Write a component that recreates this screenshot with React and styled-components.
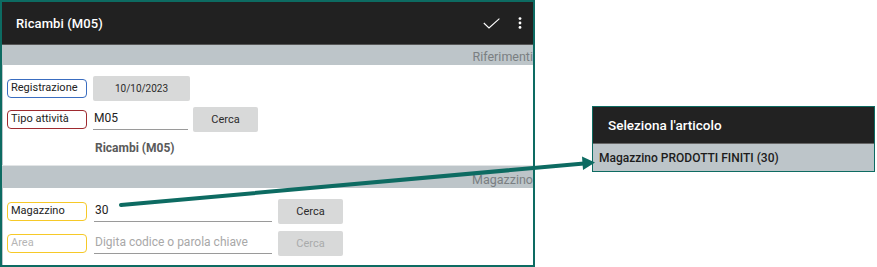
import React from 'react';
import styled, { createGlobalStyle } from 'styled-components';

const TEAL = '#0d6b62';

const GlobalStyle = createGlobalStyle`
  html, body { margin: 0; padding: 0; background: #fff; }
  body { font-family: Roboto, "Noto Sans", sans-serif; }
`;

const Stage = styled.div`
  position: relative;
  width: 877px;
  height: 267px;
  display: flex;
  align-items: flex-start;
  overflow: hidden;
`;

const Panel = styled.div`
  width: 531px;
  height: 263px;
  border: 2px solid ${TEAL};
  background: #bdc5c9;
  display: flex;
  flex-direction: column;
  overflow: hidden;
`;

const Toolbar = styled.div`
  height: 43px;
  flex-shrink: 0;
  background: #212121;
  color: #fff;
  display: flex;
  align-items: center;
  padding-left: 14px;
  padding-right: 11px;
  border-bottom: 1px solid #555;
  box-sizing: border-box;
`;

const Title = styled.div`
  flex: 1;
  font-size: 13px;
  font-weight: 500;
  letter-spacing: 0.1px;
`;

const ToolIcons = styled.div`
  display: flex;
  align-items: center;
  gap: 18px;
`;

const Band = styled.div`
  height: ${(p) => p.$h}px;
  flex-shrink: 0;
  display: flex;
  align-items: flex-end;
  justify-content: flex-end;
  color: #7a7f82;
  font-size: 12.5px;
  line-height: 17px;
  margin-right: 0;
  border-top: ${(p) => (p.$line ? '1px solid #e2e5e6' : 'none')};
  box-sizing: border-box;
`;

const Card = styled.div`
  background: #fff;
  margin-left: 1px;
  height: ${(p) => p.$h}px;
  flex-shrink: 0;
  box-sizing: border-box;
  padding: ${(p) => p.$pad};
  display: flex;
  flex-direction: column;
  gap: ${(p) => p.$gap}px;
`;

const Row = styled.div`
  display: flex;
  align-items: center;
  height: 25px;
`;

const Label = styled.div`
  width: 80px;
  height: 19px;
  box-sizing: border-box;
  margin-left: 4px;
  border: 1.5px solid ${(p) => p.$color};
  border-radius: 4px;
  font-size: 11px;
  line-height: 16px;
  padding-left: 3px;
  color: ${(p) => (p.$faint ? '#b5b5b5' : '#222')};
`;

const GrayButton = styled.div`
  width: ${(p) => p.$w}px;
  height: 25px;
  margin-left: ${(p) => p.$ml}px;
  background: #d8d9d9;
  border-radius: 2px;
  display: flex;
  align-items: center;
  justify-content: center;
  font-size: ${(p) => p.$fs || 11}px;
  color: ${(p) => (p.$disabled ? '#a9abab' : '#2b2b2b')};
`;

const Field = styled.div`
  width: ${(p) => p.$w}px;
  margin-left: ${(p) => p.$ml}px;
  height: 22px;
  border-bottom: 1px solid #9a9a9a;
  box-sizing: border-box;
  font-size: 12px;
  line-height: 20px;
  padding-left: 1px;
  color: ${(p) => (p.$placeholder ? '#a8a8a8' : '#222')};
  white-space: nowrap;
  align-self: center;
  margin-top: -2px;
`;

const Caption = styled.div`
  margin-left: 92px;
  font-size: 12px;
  font-weight: 700;
  color: #5a5a5a;
  margin-top: 3px;
`;

const Dialog = styled.div`
  margin-left: 57px;
  margin-top: 106px;
  width: 281px;
  border: 1.5px solid ${TEAL};
  display: flex;
  flex-direction: column;
`;

const DialogHead = styled.div`
  height: 37px;
  background: #222;
  color: #fff;
  font-size: 13.5px;
  font-weight: 500;
  padding-left: 15px;
  display: flex;
  align-items: center;
  border-bottom: 1px solid #666;
  box-sizing: border-box;
`;

const DialogItem = styled.div`
  height: 27px;
  background: #bdc5c9;
  color: #1c1c1c;
  font-size: 12px;
  font-weight: 500;
  padding-left: 6px;
  display: flex;
  align-items: center;
`;

const Arrow = styled.svg`
  position: absolute;
  left: 0;
  top: 0;
  pointer-events: none;
`;

const CheckIcon = () => (
  <svg width="17" height="11" viewBox="0 0 17 11">
    <path d="M0.8 5 L6 10 L16.4 0.6" fill="none" stroke="#fff" strokeWidth="1.1" />
  </svg>
);

const MoreIcon = () => (
  <svg width="4" height="12" viewBox="0 0 4 12">
    <circle cx="2" cy="1.6" r="1.4" fill="#fff" />
    <circle cx="2" cy="6" r="1.4" fill="#fff" />
    <circle cx="2" cy="10.4" r="1.4" fill="#fff" />
  </svg>
);

export default function App() {
  return (
    <>
      <GlobalStyle />
      <Stage>
        <Panel>
          <Toolbar>
            <Title>Ricambi (M05)</Title>
            <ToolIcons>
              <CheckIcon />
              <MoreIcon />
            </ToolIcons>
          </Toolbar>
          <Band $h={20}>Riferimenti</Band>
          <Card $h={100} $pad="11px 0 0 0" $gap={6}>
            <Row>
              <Label $color="#3a6dc0">Registrazione</Label>
              <GrayButton $w={97} $ml={6} $fs={10}>10/10/2023</GrayButton>
            </Row>
            <Row>
              <Label $color="#9e2a2f">Tipo attività</Label>
              <Field $w={95} $ml={6}>M05</Field>
              <GrayButton $w={65} $ml={5}>Cerca</GrayButton>
            </Row>
            <Caption>Ricambi (M05)</Caption>
          </Card>
          <Band $h={23} $line>Magazzino</Band>
          <Card $h={77} $pad="11px 0 0 0" $gap={7}>
            <Row>
              <Label $color="#f6c928">Magazzino</Label>
              <Field $w={178} $ml={7}>30</Field>
              <GrayButton $w={65} $ml={6}>Cerca</GrayButton>
            </Row>
            <Row>
              <Label $color="#f6c928" $faint>Area</Label>
              <Field $w={178} $ml={7} $placeholder>Digita codice o parola chiave</Field>
              <GrayButton $w={65} $ml={6} $disabled>Cerca</GrayButton>
            </Row>
          </Card>
        </Panel>
        <Dialog>
          <DialogHead>Seleziona l'articolo</DialogHead>
          <DialogItem>Magazzino PRODOTTI FINITI (30)</DialogItem>
        </Dialog>
        <Arrow width="877" height="267" viewBox="0 0 877 267">
          <line x1="121" y1="205" x2="584" y2="163.5" stroke={TEAL} strokeWidth="4" strokeLinecap="round" />
          <polygon points="595,162.5 582,156.5 583,170" fill={TEAL} />
        </Arrow>
      </Stage>
    </>
  );
}
